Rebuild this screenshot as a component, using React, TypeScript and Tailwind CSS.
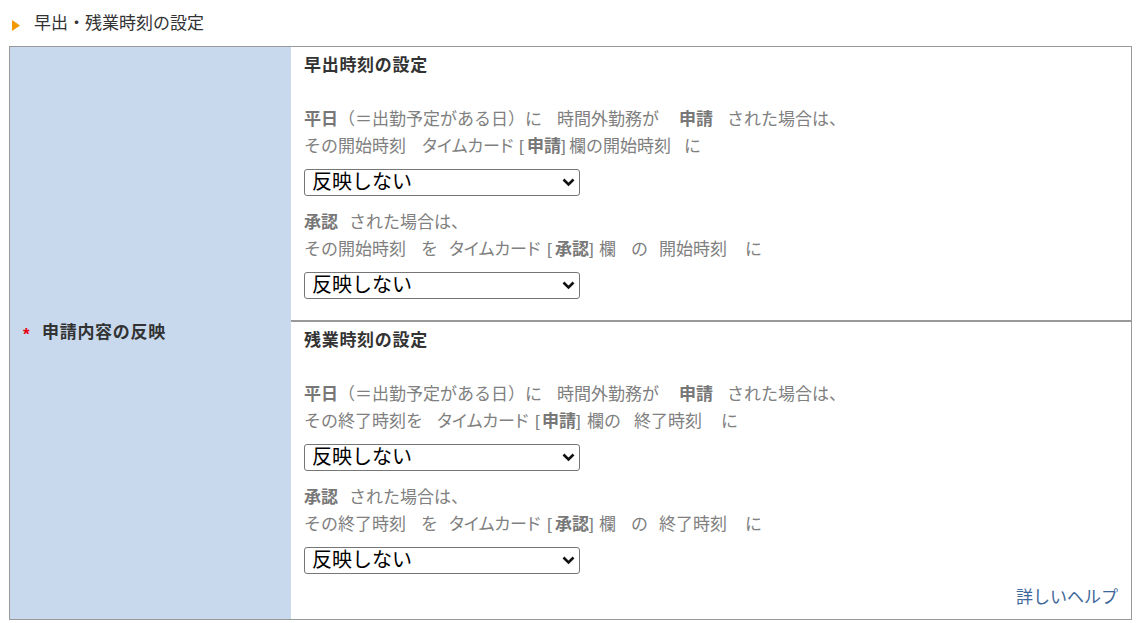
import type { ReactNode } from "react";

const font = { fontFamily: '"Liberation Sans", "Noto Sans CJK JP", sans-serif' };

type SegProps = { className?: string; b?: boolean; kana?: boolean; children: ReactNode };

// 1行の中の文字の塊。幅を固定して元画面の文字位置に揃える
const Seg = ({ className = "", b, kana, children }: SegProps) => (
	<span
		className={`shrink-0 whitespace-nowrap ${b ? "font-bold text-[#777]" : ""} ${kana ? "[font-feature-settings:'palt']" : ""} ${className}`}
	>
		{children}
	</span>
);

const Line = ({ children }: { children: ReactNode }) => (
	<div className="flex text-[17px] leading-[27px] text-[#808080]">{children}</div>
);

const ReflectSelect = () => (
	<div className="relative w-[276px] h-[27px]">
		<select
			defaultValue="none"
			className="appearance-none w-full h-full border border-[#767676] rounded-[3px] bg-white pl-[7px] text-[20px] leading-[25px] text-black outline-none"
		>
			<option value="none">反映しない</option>
			<option value="apply">反映する</option>
		</select>
		<svg
			className="absolute right-[5px] top-[9px] pointer-events-none"
			width="13"
			height="9"
			viewBox="0 0 13 9"
		>
			<polyline points="1.5,1.5 6.5,6.5 11.5,1.5" fill="none" stroke="#111" strokeWidth="2.6" />
		</svg>
	</div>
);

const ApplyFirstLine = () => (
	<Line>
		<Seg b className="w-[34px]">平日</Seg>
		<Seg className="w-[187px]">（＝出勤予定がある日）</Seg>
		<Seg className="w-[32px]">に</Seg>
		<Seg className="w-[122px]">時間外勤務が</Seg>
		<Seg b className="w-[48px]">申請</Seg>
		<Seg>された場合は、</Seg>
	</Line>
);

const ApproveFirstLine = () => (
	<Line>
		<Seg b className="w-[45px]">承認</Seg>
		<Seg>された場合は、</Seg>
	</Line>
);

const ApproveSecondLine = ({ word }: { word: string }) => (
	<Line>
		<Seg className="w-[117px]">その{word}</Seg>
		<Seg className="w-[28px]">を</Seg>
		<Seg kana className="w-[98px]">タイムカード</Seg>
		<Seg className="w-[8px]">[</Seg>
		<Seg b className="w-[34px]">承認</Seg>
		<Seg className="w-[10px]">]</Seg>
		<Seg className="w-[32px]">欄</Seg>
		<Seg className="w-[28px]">の</Seg>
		<Seg className="w-[86px]">{word}</Seg>
		<Seg>に</Seg>
	</Line>
);

type SectionProps = {
	title: string;
	applyLine: ReactNode;
	approveLine: ReactNode;
	top: string;
	bottom: string;
};

const Section = ({ title, applyLine, approveLine, top, bottom }: SectionProps) => (
	<div className={`pl-[13px] pr-3 ${top} ${bottom}`}>
		<h3 className="text-[17px] leading-[24px] font-bold text-[#333] tracking-[0.7px]">{title}</h3>

		{/* 申請された場合 */}
		<div className="mt-[28px]">
			<ApplyFirstLine />
			{applyLine}
		</div>
		<div className="mt-[9px]">
			<ReflectSelect />
		</div>

		{/* 承認された場合 */}
		<div className="mt-[13px]">
			<ApproveFirstLine />
			{approveLine}
		</div>
		<div className="mt-[9px]">
			<ReflectSelect />
		</div>
	</div>
);

export default function App() {
	return (
		<div className="bg-white w-[1139px] h-[623px] pl-[9px] pr-[7px]" style={font}>
			{/* 見出し */}
			<div className="h-[46px] flex items-center gap-[14px] pl-[3px] pt-[2px]">
				<svg width="8" height="11" viewBox="0 0 8 11" className="mt-[2px]">
					<path d="M0 0 L8 5.5 L0 11 Z" fill="#f39800" />
				</svg>
				<span className="text-[17px] text-[#333]">早出・残業時刻の設定</span>
			</div>

			<div className="flex border border-[#999] h-[574px]">
				<div className="w-[281px] shrink-0 bg-[#c8d9ee] flex items-center pl-[13px]">
					<span className="text-[#e60012] font-bold text-[17px] w-[19px] mt-[3px]">*</span>
					<span className="text-[17px] font-bold text-[#333] tracking-[0.7px]">申請内容の反映</span>
				</div>

				<div className="flex-1 flex flex-col">
					<Section
						title="早出時刻の設定"
						top="pt-[7px]"
						bottom="pb-[21px]"
						applyLine={
							<Line>
								<Seg className="w-[118px]">その開始時刻</Seg>
								<Seg kana className="w-[97px]">タイムカード</Seg>
								<Seg className="w-[8px]">[</Seg>
								<Seg b className="w-[34px]">申請</Seg>
								<Seg className="w-[8px]">]</Seg>
								<Seg className="w-[115px]">欄の開始時刻</Seg>
								<Seg>に</Seg>
							</Line>
						}
						approveLine={<ApproveSecondLine word="開始時刻" />}
					/>
					<div className="border-t-2 border-[#999]" />
					<Section
						title="残業時刻の設定"
						top="pt-[7px]"
						bottom="pb-0"
						applyLine={
							<Line>
								<Seg className="w-[133px]">その終了時刻を</Seg>
								<Seg kana className="w-[98px]">タイムカード</Seg>
								<Seg className="w-[7px]">[</Seg>
								<Seg b className="w-[34px]">申請</Seg>
								<Seg className="w-[11px]">]</Seg>
								<Seg className="w-[47px]">欄の</Seg>
								<Seg className="w-[87px]">終了時刻</Seg>
								<Seg>に</Seg>
							</Line>
						}
						approveLine={<ApproveSecondLine word="終了時刻" />}
					/>
					<div className="flex justify-end pr-[13px] mt-[12px]">
						<a href="#" className="text-[17px] leading-[24px] text-[#3d6799]">
							詳しいヘルプ
						</a>
					</div>
				</div>
			</div>
		</div>
	);
}
